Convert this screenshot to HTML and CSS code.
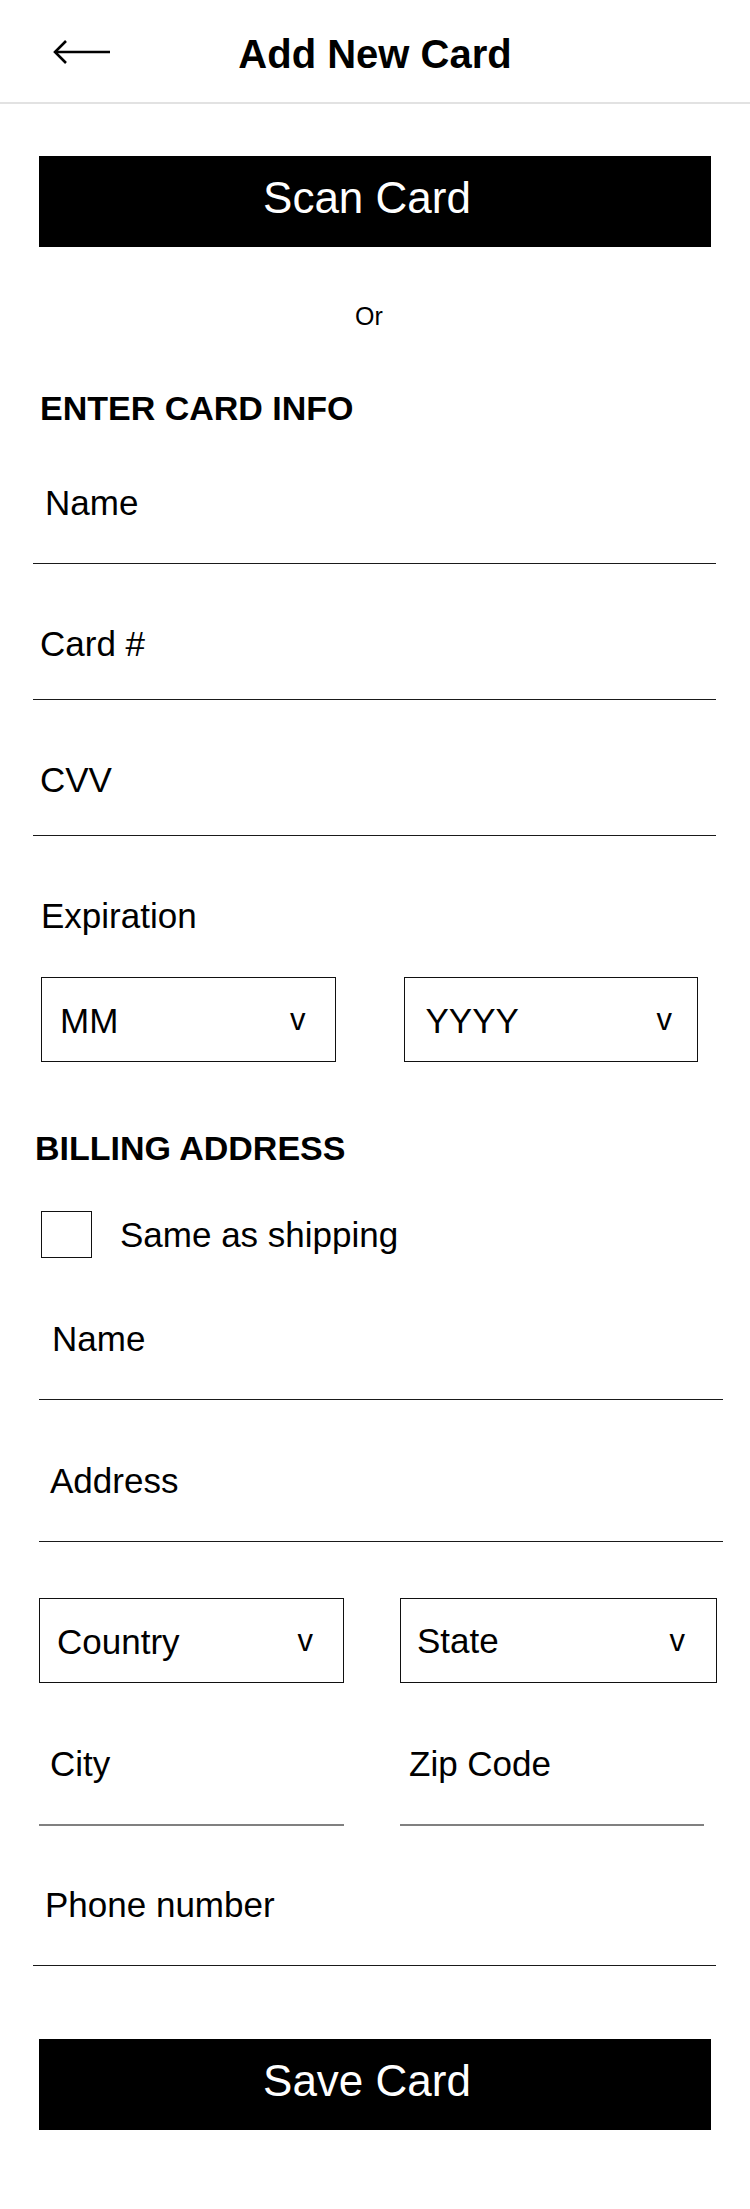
FILE: index.html
```html
<!DOCTYPE html>
<html lang="en">
<head>
<meta charset="utf-8">
<title>Add New Card</title>
<link rel="stylesheet" href="styles.css">
</head>
<body>
<header class="topbar">
  <a class="back" aria-label="Back">
    <svg width="60" height="28" viewBox="0 0 60 28" fill="none" stroke="#000" stroke-width="2.6" stroke-linecap="butt" stroke-linejoin="miter">
      <path d="M14 3 L3 14 L14 25"/>
      <path d="M3 14 H58"/>
    </svg>
  </a>
  <h1 class="title">Add New Card</h1>
  <span class="spacer"></span>
</header>

<main class="page">
  <button class="btn btn--scan" type="button">Scan Card</button>
  <p class="or">Or</p>

  <h2 class="section-title section-title--card">ENTER CARD INFO</h2>
  <div class="field field--card field--first"><span class="field-label">Name</span></div>
  <div class="field field--card"><span class="field-label">Card #</span></div>
  <div class="field field--card"><span class="field-label">CVV</span></div>

  <p class="expiry-label">Expiration</p>
  <div class="select-row select-row--expiry">
    <div class="select"><span class="select-text">MM</span><span class="caret">v</span></div>
    <div class="select select--year"><span class="select-text">YYYY</span><span class="caret">v</span></div>
  </div>

  <h2 class="section-title section-title--billing">BILLING ADDRESS</h2>
  <label class="check-row">
    <span class="checkbox"></span>
    <span class="check-label">Same as shipping</span>
  </label>

  <div class="field field--billing"><span class="field-label">Name</span></div>
  <div class="field field--billing field--address"><span class="field-label">Address</span></div>

  <div class="select-row select-row--region">
    <div class="select select--country"><span class="select-text">Country</span><span class="caret">v</span></div>
    <div class="select select--state"><span class="select-text select-text--state">State</span><span class="caret">v</span></div>
  </div>

  <div class="half-row">
    <div class="half-field"><span class="field-label">City</span></div>
    <div class="half-field half-field--zip"><span class="field-label">Zip Code</span></div>
  </div>

  <div class="field field--card field--phone"><span class="field-label">Phone number</span></div>

  <button class="btn btn--save" type="button">Save Card</button>
</main>
</body>
</html>
```

FILE: styles.css
```css
* {
  box-sizing: border-box;
}

html, body {
  margin: 0;
  padding: 0;
  background: #fff;
}

body {
  font-family: "Liberation Sans", Arial, sans-serif;
  color: #000;
  width: 750px;
}

/* ---------- header ---------- */
.topbar {
  display: grid;
  grid-template-columns: 1fr auto 1fr;
  align-items: start;
  padding: 31px 0 25px;
  border-bottom: 2px solid #e2e2e2;
}

.back {
  display: block;
  width: 60px;
  height: 28px;
  margin: 7px 0 0 52px;
}

.back svg {
  display: block;
}

.title {
  margin: 0;
  font-size: 40px;
  line-height: 46px;
  font-weight: 700;
  white-space: nowrap;
}

/* ---------- page ---------- */
.page {
  display: block;
  padding-bottom: 79px;
}

.btn {
  display: block;
  width: 672px;
  height: 91px;
  margin: 0 0 0 39px;
  padding: 17px 16px 24px 0;
  border: 0;
  border-radius: 0;
  background: #000;
  color: #fff;
  font-family: inherit;
  font-size: 44px;
  line-height: 50px;
  font-weight: 400;
  text-align: center;
}

.btn--scan {
  margin-top: 52px;
}

.btn--save {
  margin-top: 73px;
}

.or {
  margin: 54px 0 0;
  padding-right: 12px;
  font-size: 25px;
  line-height: 30px;
  text-align: center;
}

.section-title {
  margin: 0;
  font-size: 34px;
  line-height: 40px;
  font-weight: 700;
}

.section-title--card {
  margin: 57px 0 0 40px;
}

.section-title--billing {
  margin: 66px 0 0 35px;
}

/* ---------- underline fields ---------- */
.field {
  border-bottom: 1px solid #1a1a1a;
}

.field-label {
  display: block;
  font-size: 35px;
  line-height: 40px;
  white-space: nowrap;
}

.field--card {
  margin-left: 33px;
  width: 683px;
  padding: 60px 0 35px 7px;
}

.field--first {
  padding: 55px 0 40px 12px;
}

.field--phone {
  padding: 59px 0 40px 12px;
}

.field--billing {
  margin-left: 39px;
  width: 684px;
  padding: 61px 0 40px 13px;
}

.field--address {
  padding-left: 11px;
}

/* ---------- expiry ---------- */
.expiry-label {
  margin: 60px 0 0 41px;
  font-size: 35px;
  line-height: 40px;
}

.select-row {
  display: grid;
}

.select-row--expiry {
  grid-template-columns: 1fr 1fr;
  column-gap: 68px;
  width: 657px;
  margin: 41px 0 0 41px;
}

.select-row--region {
  grid-template-columns: 305px 317px;
  column-gap: 56px;
  margin: 56px 0 0 39px;
}

.select {
  display: flex;
  align-items: flex-start;
  justify-content: space-between;
  height: 85px;
  padding: 23px 29px 0 18px;
  border: 1px solid #111;
}

.select--year {
  padding-left: 21px;
  padding-right: 25px;
}

.select--country {
  padding-left: 17px;
  padding-right: 30px;
}

.select--state {
  padding-left: 16px;
  padding-right: 31px;
}

.select-text {
  font-size: 35px;
  line-height: 40px;
}

.select-text--state {
  margin-top: -1px;
}

.caret {
  font-size: 31px;
  line-height: 40px;
  margin-top: -1px;
}

/* ---------- checkbox ---------- */
.check-row {
  display: flex;
  align-items: flex-start;
  gap: 28px;
  margin: 43px 0 0 41px;
}

.checkbox {
  display: block;
  width: 51px;
  height: 47px;
  border: 1px solid #111;
}

.check-label {
  margin-top: 4px;
  font-size: 35px;
  line-height: 40px;
}

/* ---------- city / zip ---------- */
.half-row {
  display: grid;
  grid-template-columns: 305px 304px;
  column-gap: 56px;
  margin-left: 39px;
}

.half-field {
  padding: 61px 0 40px 11px;
  border-bottom: 2px solid #808080;
}

.half-field--zip {
  padding-left: 9px;
}
```
